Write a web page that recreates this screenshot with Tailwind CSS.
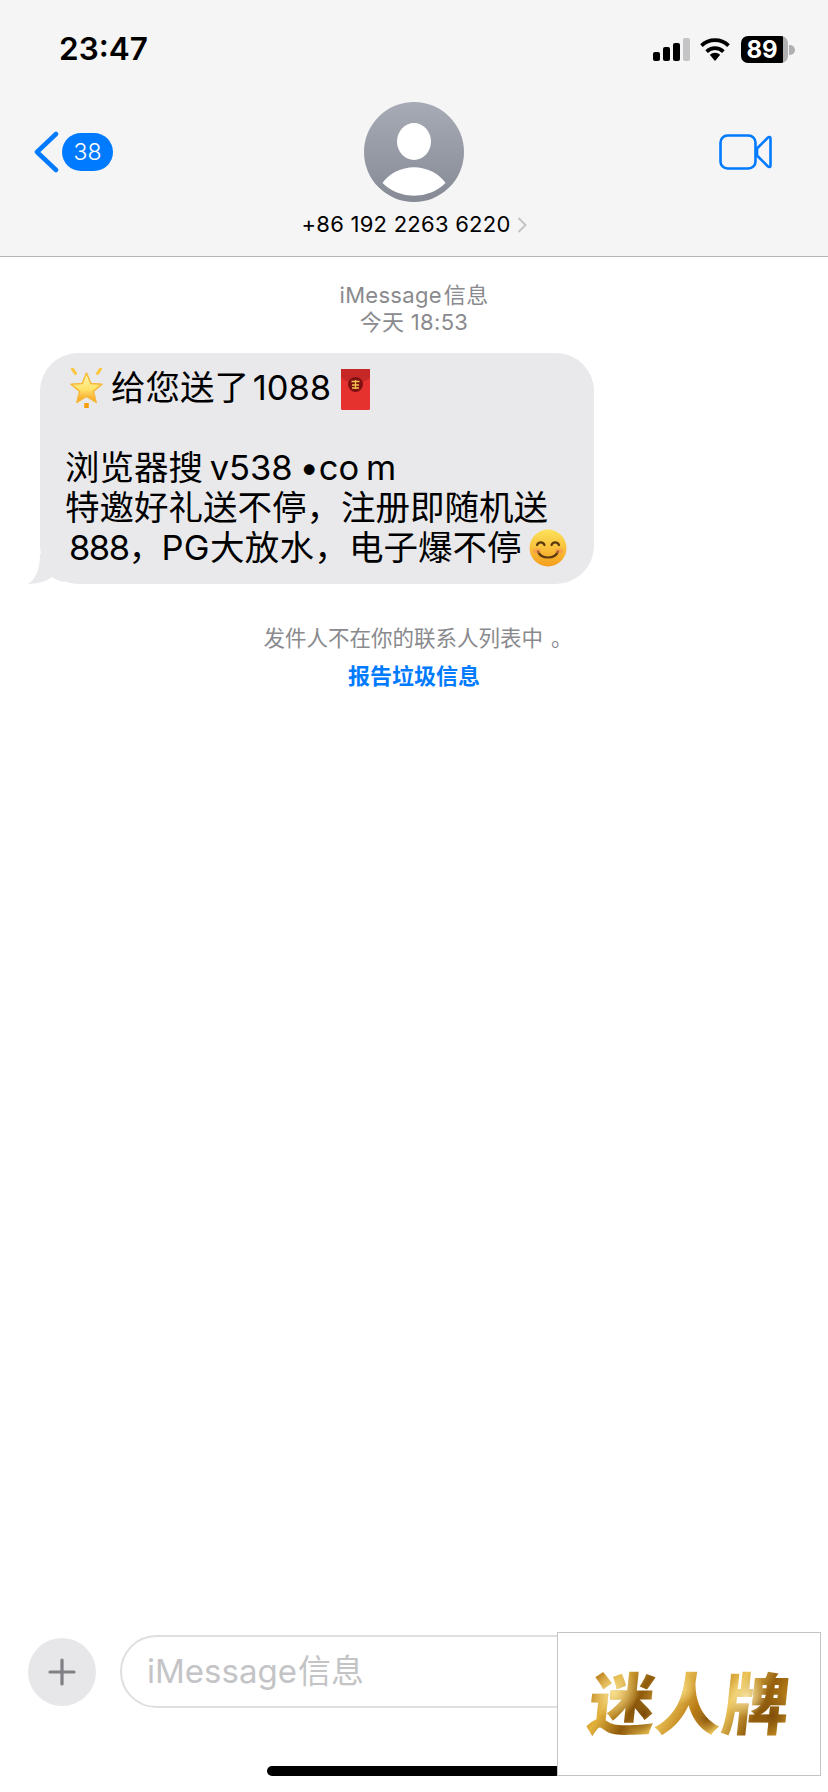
<!DOCTYPE html>
<html lang="zh">
<head>
<meta charset="utf-8">
<script src="https://cdn.jsdelivr.net/npm/@tailwindcss/browser@4"></script>
</head>
<body class="bg-white">
<div class="relative w-[828px] h-[1792px] flex flex-col overflow-hidden bg-white text-black font-['Inter','Noto_Sans_CJK_SC',sans-serif]">

  <header class="h-[257px] shrink-0 bg-[#f5f5f5] border-b border-[#b4b4b6] flex flex-col">
    <div class="h-[100px] pt-[32px] pl-[59px] pr-[33px] flex justify-between items-start">
      <span class="text-[31.500px] leading-[34px] font-semibold">23:47</span>
      <div class="flex items-start">
        <svg class="mt-[6px]" width="37" height="23" viewBox="0 0 37 23"><rect x="0" y="14" width="7" height="9" rx="2" fill="#000"/><rect x="10" y="9" width="7" height="14" rx="2" fill="#000"/><rect x="20" y="5" width="7" height="18" rx="2" fill="#000"/><rect x="30" y="0" width="7" height="23" rx="2" fill="#c4c4c6"/></svg>
        <svg class="ml-[9px] mt-[5px]" width="32" height="24" viewBox="0 0 32 24"><path d="M16 24l-5.200-6.200a7.500 7.500 0 0 1 10.400 0z" fill="#000"/><path d="M7.600 14.600a12 12 0 0 1 16.800 0" fill="none" stroke="#000" stroke-width="3.600"/><path d="M2.500 8.600a19.500 19.500 0 0 1 27 0" fill="none" stroke="#000" stroke-width="3.800"/></svg>
        <div class="ml-[10px] mt-[4px] flex items-center">
          <div class="w-[47px] h-[27px] rounded-[7px] bg-[linear-gradient(90deg,#000_0,#000_89%,#b0b0b2_89%,#b0b0b2_100%)] flex items-center justify-center pr-[5px] text-white text-[24px] leading-none font-bold">89</div>
          <div class="w-[6px] h-[10px] ml-[1px] rounded-r-full bg-[#b0b0b2]"></div>
        </div>
      </div>
    </div>
    <div class="grid grid-cols-[1fr_auto_1fr] items-start">
      <div class="flex items-center pl-[33px] pt-[31px]">
        <svg width="26" height="42" viewBox="0 0 26 42"><path d="M23 3L4 21l19 18" fill="none" stroke="#007aff" stroke-width="4.500" stroke-linecap="round" stroke-linejoin="round"/></svg>
        <span class="ml-[3px] w-[51px] h-[38px] rounded-full bg-[#007aff] text-white text-[23px] leading-[38px] text-center font-light">38</span>
      </div>
      <div class="flex flex-col items-center pt-[2px]">
        <div class="w-[100px] h-[100px] rounded-full bg-[linear-gradient(180deg,#a7abb6,#868a95)] overflow-hidden">
          <svg width="100" height="100" viewBox="0 0 100 100"><ellipse cx="50" cy="39.500" rx="17" ry="18.500" fill="#fff"/><path d="M18.500 81a37 33 0 0 1 63 0a45 45 0 0 1-63 0z" fill="#fff"/></svg>
        </div>
        <div class="mt-[9px] flex items-center h-[27px]">
          <span class="text-[22px] leading-[27px] tracking-[0.25px]">+86 192 2263 6220</span>
          <svg class="ml-[6px]" width="10" height="16" viewBox="0 0 10 16"><path d="M1.500 1l7 7-7 7" fill="none" stroke="#c2c2c4" stroke-width="1.800"/></svg>
        </div>
      </div>
      <div class="flex justify-end pr-[56px] pt-[34px]">
        <svg width="53" height="36" viewBox="0 0 53 36"><rect x="1.500" y="1.500" width="35" height="33" rx="7" fill="none" stroke="#007aff" stroke-width="2.600"/><path d="M38 14.500L49 3.500c1.300-1 2.500-.5 2.500 1v27c0 1.500-1.200 2-2.500 1L38 21.500z" fill="none" stroke="#007aff" stroke-width="2.600" stroke-linejoin="round"/></svg>
      </div>
    </div>
  </header>

  <main class="flex-1 flex flex-col">
    <div class="pt-[25px] text-center text-[#8a8a8e] text-[22px] leading-[27px]">
      <div class="tracking-[0.3px]">iMessage<span class="ml-[2px]">信息</span></div>
      <div class="tracking-[0.3px]">今天 18:53</div>
    </div>

    <div class="relative mt-[17px] ml-[40px] w-[554px] h-[231px] rounded-[38px] bg-[#e9e9eb] pt-[15px] pl-[25px] text-[34.500px] leading-[40px] whitespace-nowrap">
      <svg class="absolute left-[-12px] bottom-0" width="36" height="30" viewBox="0 0 36 30"><path d="M12 0 C12 14 8 25 0 30 C10 30 19 27 24 23 C27 25 31 27 36 28 L36 0z" fill="#e9e9eb"/></svg>
      <div class="relative flex items-center h-[40px]">
        <svg class="ml-[3px] shrink-0" width="37" height="40" viewBox="0 0 37 40"><defs><linearGradient id="star" x1="0" y1="0" x2="0" y2="1"><stop offset="0" stop-color="#fff6b8"/><stop offset="0.55" stop-color="#ffe36a"/><stop offset="1" stop-color="#f79a1e"/></linearGradient></defs><path d="M18.500 5l4.300 10.400 11.200.8-8.600 7.200 2.800 11-9.700-6-9.700 6 2.800-11-8.600-7.200 11.200-.8z" fill="url(#star)" stroke="#f8b93a" stroke-width="1.500" stroke-linejoin="round"/><path d="M4.500 1l3 4.500M32.500 1l-3 4.500" stroke="#fcc63a" stroke-width="3" stroke-linecap="round"/><path d="M18.500 35v5" stroke="#f59e0b" stroke-width="4.500"/></svg>
        <span class="ml-[6px] [word-spacing:-6px]">给您送了 1088</span>
        <svg class="ml-[10px] shrink-0 mb-[-2px]" width="29" height="41" viewBox="0 0 29 41"><rect width="29" height="41" rx="1.500" fill="#e6322f"/><path d="M0 0h29v9l-14.500 8L0 9z" fill="#c62828"/><circle cx="14.500" cy="15.500" r="7.500" fill="#7f1010"/><path d="M10.500 12.500h8M14.500 11v9M11 16h7M11 19h7" stroke="#f2c14e" stroke-width="1.300"/></svg>
      </div>
      <div class="h-[40px]"></div>
      <div class="h-[40px] [word-spacing:-3px]">浏览器搜 v538 •co m</div>
      <div class="h-[40px]">特邀好礼送不停，注册即随机送</div>
      <div class="flex items-center h-[40px] pl-[4px]">
        <span><span class="tracking-[-1.500px]">888，</span><span class="tracking-[0.3px]">PG大放水，</span>电子爆不停</span>
        <svg class="ml-[7px] shrink-0" width="38" height="38" viewBox="0 0 38 38"><defs><linearGradient id="face" x1="0" y1="0" x2="0" y2="1"><stop offset="0" stop-color="#fde25a"/><stop offset="1" stop-color="#f59e1c"/></linearGradient></defs><circle cx="19" cy="19" r="18.500" fill="url(#face)"/><path d="M8 16c1.500-3.500 6-3.500 7.500 0M22.500 16c1.500-3.500 6-3.500 7.500 0" fill="none" stroke="#5b3a10" stroke-width="2.200" stroke-linecap="round"/><path d="M9 22.500c3 8 17 8 20 0" fill="none" stroke="#5b3a10" stroke-width="2.200" stroke-linecap="round"/><ellipse cx="8" cy="22" rx="4" ry="2.500" fill="#f9835a" opacity=".45"/><ellipse cx="30" cy="22" rx="4" ry="2.500" fill="#f9835a" opacity=".45"/></svg>
      </div>
    </div>

    <p class="mt-[39px] pl-[8px] text-center text-[#8a8a8e] text-[21.500px] leading-[27px]">发件人不在你的联系人列表中<span class="ml-[8px] font-['Noto_Sans_CJK_TC',sans-serif]">。</span></p>
    <p class="mt-[11px] text-center text-[#007aff] text-[22px] leading-[27px] font-semibold">报告垃圾信息</p>
  </main>

  <footer class="h-[157px] shrink-0 flex flex-col">
    <div class="flex items-center pl-[28px] pr-[28px] h-[73px]">
      <div class="w-[68px] h-[68px] rounded-full bg-[#e7e7e9] flex items-center justify-center shrink-0">
        <svg width="28" height="28" viewBox="0 0 28 28"><path d="M14 2v24M2 14h24" stroke="#7f7f85" stroke-width="3.200" stroke-linecap="round"/></svg>
      </div>
      <div class="ml-[24px] flex-1 h-[73px] rounded-full border-2 border-[#dfdfe1] pl-[25px] flex items-center text-[#c4c4c6] text-[33px]">iMessage<span class="ml-[1px]">信息</span></div>
    </div>
    <div class="mt-auto mb-[16px] mx-auto w-[294px] h-[10px] rounded-full bg-black"></div>
  </footer>

  <div class="absolute left-[557px] top-[1632px] w-[264px] h-[144px] bg-white border border-[#c4c4c4] flex items-center justify-center pb-[8px]">
    <span class="-skew-x-6 font-['Noto_Sans_CJK_SC',sans-serif] font-black text-[67px] leading-[72px] whitespace-nowrap bg-[radial-gradient(circle_at_12%_40%,#f6dc8c_0,transparent_14%),radial-gradient(circle_at_28%_70%,#7a4a08_0,transparent_12%),radial-gradient(circle_at_45%_35%,#f4d77e_0,transparent_13%),radial-gradient(circle_at_60%_75%,#86520a_0,transparent_12%),radial-gradient(circle_at_78%_45%,#f7e29c_0,transparent_13%),radial-gradient(circle_at_92%_72%,#7f4e09_0,transparent_12%),linear-gradient(115deg,#a8680c_0%,#e3b23c_15%,#8f5a0a_28%,#e9bf52_42%,#b87a14_55%,#edc65a_68%,#945e0c_82%,#d9a32f_100%)] bg-clip-text text-transparent">迷人牌</span>
  </div>
</div>
</body>
</html>
